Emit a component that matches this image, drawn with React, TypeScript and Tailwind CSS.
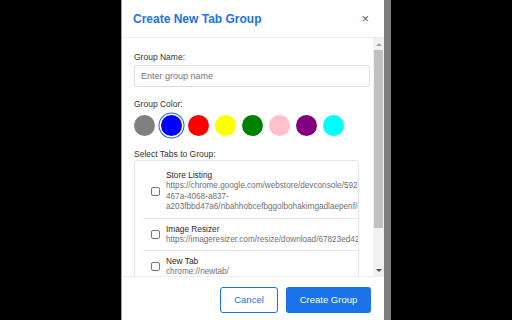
const swatches = ["#808080", "#0000ff", "#ff0000", "#ffff00", "#008000", "#ffc0cb", "#800080", "#00ffff"];

type Tab = { title: string; lines: string[] };

const tabs: Tab[] = [
  {
    title: "Store Listing",
    lines: [
      "https://chrome.google.com/webstore/devconsole/59216b3c-",
      "467a-4068-a837-",
      "a203fbbd47a6/nbahhobcefbggolbohakimgadlaepenf/edit",
    ],
  },
  {
    title: "Image Resizer",
    lines: ["https://imageresizer.com/resize/download/67823ed42f0c1a9b3e5d7a21"],
  },
  { title: "New Tab", lines: ["chrome://newtab/"] },
];

function TabRow({ tab }: { tab: Tab }) {
  return (
    <div className="flex items-center gap-[6px] border-b border-[#ebebeb] py-[5px] pl-[8px]">
      <span className="h-[9px] w-[9px] shrink-0 rounded-[2px] border border-[#767676] bg-white" />
      <div className="min-w-0">
        <div className="whitespace-nowrap text-[8.3px] leading-[11px] text-[#2a2a2a]">{tab.title}</div>
        {tab.lines.map((l) => (
          <div key={l} className="whitespace-nowrap text-[8.2px] leading-[10.5px] text-[#707070]">
            {l}
          </div>
        ))}
      </div>
    </div>
  );
}

export default function App() {
  return (
    <div
      className="flex h-[320px] w-[512px] overflow-hidden bg-black"
      style={{ fontFamily: '"Liberation Sans", Arial, sans-serif' }}
    >
      <div className="w-[121px] shrink-0" />
      <div className="flex w-[263px] shrink-0 flex-col border-l border-[#a0a0a0] bg-white">
        <div className="flex h-[38px] shrink-0 items-center justify-between border-b border-[#eeeeee] pl-[11px] pr-[15px]">
          <h1 className="text-[12px] font-bold text-[#1a73e8]">Create New Tab Group</h1>
          <span className="text-[13px] leading-none text-[#666]">×</span>
        </div>

        <div className="flex min-h-0 flex-1">
          <div className="min-w-0 flex-1 overflow-hidden pl-[12px] pr-[3px] pt-[14px]">
            <label className="mb-[3px] block text-[8.5px] leading-[10px] text-[#333]">Group Name:</label>
            <input
              className="block h-[22px] w-full rounded-[3px] border border-[#dddddd] px-[6px] text-[9px] text-[#333] outline-none placeholder:text-[#777]"
              placeholder="Enter group name"
            />

            <label className="mb-[6px] mt-[12px] block text-[8.5px] leading-[10px] text-[#333]">Group Color:</label>
            <div className="flex gap-[6px]">
              {swatches.map((c, i) => (
                <span
                  key={c}
                  className={
                    i === 1
                      ? "h-[21px] w-[21px] rounded-full shadow-[0_0_0_1.5px_#ffffff,0_0_0_2.5px_#1a5ff0]"
                      : "h-[21px] w-[21px] rounded-full"
                  }
                  style={{ backgroundColor: c }}
                />
              ))}
            </div>

            <label className="mb-[1px] mt-[13px] block text-[8.5px] leading-[10px] text-[#333]">
              Select Tabs to Group:
            </label>
            <div className="w-[225px] overflow-hidden rounded-[3px] border border-[#e4e4e4] pt-[4px]">
              <div className="ml-[8px]">
                {tabs.map((t) => (
                  <TabRow key={t.title} tab={t} />
                ))}
              </div>
            </div>
          </div>

          <div className="flex w-[11px] shrink-0 flex-col items-center bg-[#f1f1f1]">
            <div className="flex h-[12px] items-center justify-center">
              <span className="h-0 w-0 border-x-[3px] border-b-[3px] border-x-transparent border-b-[#a3a3a3]" />
            </div>
            <div className="h-[178px] w-[9px] bg-[#c1c1c1]" />
            <div className="flex-1" />
            <div className="flex h-[12px] items-center justify-center">
              <span className="h-0 w-0 border-x-[3px] border-t-[3px] border-x-transparent border-t-[#505050]" />
            </div>
          </div>
        </div>

        <div className="flex h-[44px] shrink-0 justify-end gap-[8px] border-t border-[#eeeeee] pr-[13px] pt-[10px]">
          <button className="h-[26px] w-[58px] rounded-[3px] border border-[#1a73e8] bg-white text-[9.5px] text-[#1a73e8]">
            Cancel
          </button>
          <button className="h-[26px] w-[85px] rounded-[3px] bg-[#1a73e8] text-[9.5px] text-white">
            Create Group
          </button>
        </div>
      </div>
      <div className="w-[7px] shrink-0 bg-[#7d7d7d]" />
    </div>
  );
}
